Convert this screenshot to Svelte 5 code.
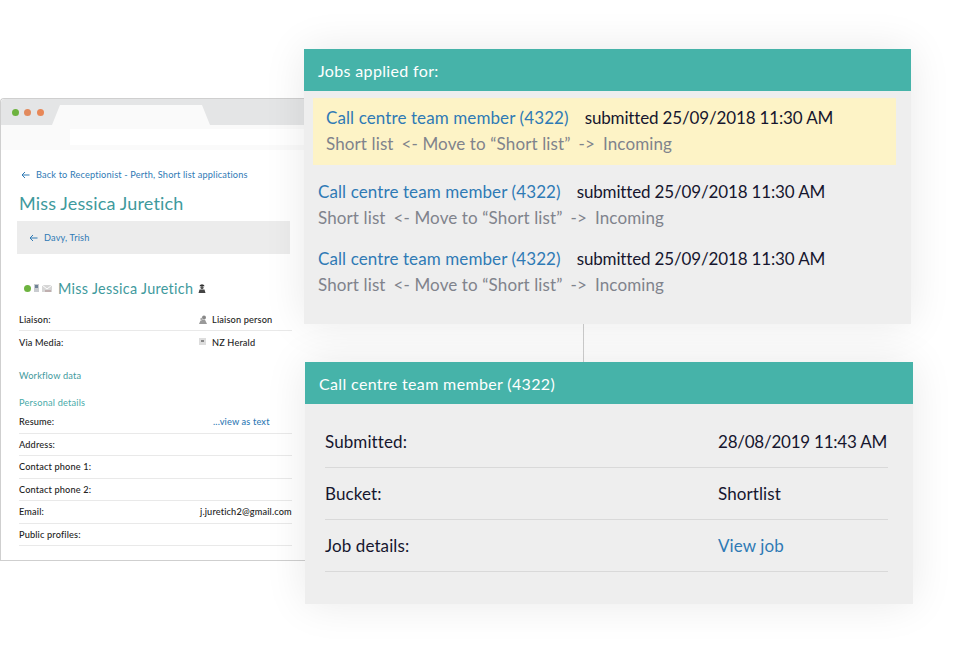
<script>
  // rows of the jobs card, the first one is highlighted
  const jobs = [
    { title: "Call centre team member (4322)", date: "25/09/2018 11:30 AM", active: true },
    { title: "Call centre team member (4322)", date: "25/09/2018 11:30 AM", active: false },
    { title: "Call centre team member (4322)", date: "25/09/2018 11:30 AM", active: false },
  ];

  const personal = [
    { label: "Resume:", value: "...view as text", link: true },
    { label: "Address:", value: "" },
    { label: "Contact phone 1:", value: "" },
    { label: "Contact phone 2:", value: "" },
    { label: "Email:", value: "j.juretich2@gmail.com" },
    { label: "Public profiles:", value: "" },
  ];

  const details = [
    { label: "Submitted:", value: "28/08/2019 11:43 AM", date: true },
    { label: "Bucket:", value: "Shortlist" },
    { label: "Job details:", value: "View job", link: true },
  ];
</script>

<div class="canvas">
  <div class="browser">
    <div class="tabbar">
      <span class="dot green"></span>
      <span class="dot orange"></span>
      <span class="dot orange2"></span>
      <span class="tab"></span>
    </div>
    <div class="addressbar"><span class="address"></span></div>
    <div class="page">
      <a class="back" href="#top">
        <svg width="9" height="8" viewBox="0 0 9 8"><path d="M8.5 4H1M4 1 1 4l3 3" fill="none" stroke="#2f7ab5" stroke-width="1"/></svg>
        Back to Receptionist - Perth, Short list applications
      </a>
      <h1>Miss Jessica Juretich</h1>
      <div class="crumb">
        <svg width="9" height="8" viewBox="0 0 9 8"><path d="M8.5 4H1M4 1 1 4l3 3" fill="none" stroke="#2f7ab5" stroke-width="1"/></svg>
        <span>Davy, Trish</span>
      </div>
      <div class="person">
        <span class="status"></span>
        <svg width="5" height="8" viewBox="0 0 5 8"><rect width="5" height="8" fill="#c9ccd0"/><rect x="1" y="1" width="3" height="3" fill="#6f8296"/></svg>
        <svg width="10" height="7" viewBox="0 0 10 7"><rect width="10" height="7" fill="#d6d6d6"/><path d="M0 0l5 4 5-4" fill="none" stroke="#fff"/><path d="M3 6h6" stroke="#a88" /></svg>
        <h2>Miss Jessica Juretich</h2>
        <svg class="bust" width="8" height="9" viewBox="0 0 8 9"><path d="M1.5 2.2h5L6 1 4 .3 2 1z" fill="#333"/><circle cx="4" cy="3.6" r="1.6" fill="#555"/><path d="M0.5 9 1.5 5.6h5l1 3.4z" fill="#444"/></svg>
      </div>
      <div class="row">
        <span>Liaison:</span>
        <span class="value">
          <svg class="mini" width="8" height="9" viewBox="0 0 8 9"><circle cx="5" cy="2.5" r="2" fill="#888"/><circle cx="2.5" cy="4" r="1.2" fill="#aaa"/><path d="M0 9 1.5 5.5h1L3 4.8h3L8 9z" fill="#999"/></svg>
          Liaison person
        </span>
      </div>
      <div class="row plain">
        <span>Via Media:</span>
        <span class="value">
          <svg class="mini" width="8" height="8" viewBox="0 0 8 8"><rect width="7" height="7" fill="#ddd"/><rect x="2" y="2" width="3" height="2" fill="#888"/></svg>
          NZ Herald
        </span>
      </div>
      <h3 class="workflow">Workflow data</h3>
      <h3 class="details">Personal details</h3>
      {#each personal as item}
        <div class="row tight">
          <span>{item.label}</span>
          {#if item.value}
            <span class="value" class:link={item.link}>{item.value}</span>
          {/if}
        </div>
      {/each}
    </div>
  </div>

  <div class="line"></div>

  <section class="card jobs">
    <header>Jobs applied for:</header>
    <div class="list">
      {#each jobs as job}
        <div class="job" class:active={job.active}>
          <p class="top"><a href="#top">{job.title}</a><span>submitted {job.date}</span></p>
          <p class="move"><span>Short list</span><span>&lt;- Move to “Short list”</span><span>-&gt;</span><span>Incoming</span></p>
        </div>
      {/each}
    </div>
  </section>

  <section class="card summary">
    <header>Call centre team member (4322)</header>
    <div class="rows">
      {#each details as item}
        <div class="detail">
          <span>{item.label}</span>
          <span class="right" class:link={item.link} class:date={item.date}>{item.value}</span>
        </div>
      {/each}
    </div>
  </section>
</div>

<style>
  :global(body) {
    background: #fff;
    font-family: "Lato", "Open Sans", sans-serif;
  }

  .canvas {
    position: relative;
    width: 960px;
    height: 651px;
    overflow: hidden;
    color: #16162e;
  }

  /* the three windows sit freely on the canvas */
  .browser {
    position: absolute;
    left: 0;
    top: 98px;
    width: 305px;
    height: 463px;
    box-sizing: border-box;
    border: 1px solid #cfcfcf;
    border-right: none;
    border-radius: 4px 0 0 0;
    background: #fff;
  }

  .tabbar {
    display: flex;
    align-items: center;
    gap: 5px;
    position: relative;
    height: 26px;
    padding-left: 11px;
    background: #e4e5e6;
    border-radius: 4px 0 0 0;
  }
  .dot {
    width: 7px;
    height: 7px;
    border-radius: 50%;
  }
  .green { background: #6db33f; }
  .orange { background: #e28a5d; }
  .orange2 { background: #e88757; margin-left: 1px; }
  .tab {
    position: absolute;
    left: 51px;
    bottom: 0;
    width: 158px;
    height: 20px;
    background: #fafafa;
    clip-path: polygon(8px 0, 150px 0, 100% 100%, 0 100%);
  }
  .addressbar {
    height: 25px;
    background: #fafafa;
    padding: 4px 0 0 69px;
    box-sizing: border-box;
  }
  .address {
    display: block;
    height: 16px;
    background: #fff;
  }

  .page {
    padding: 18px 13px 0 18px;
  }
  .back {
    display: flex;
    align-items: center;
    gap: 6px;
    margin-left: 2px;
    color: #2f7ab5;
    font-size: 9.2px;
    line-height: 14px;
    text-decoration: none;
    letter-spacing: 0.16px;
  }
  h1 {
    margin: 9px 0 0;
    color: #3f9a9d;
    font-size: 18px;
    font-weight: 400;
    line-height: 24px;
    letter-spacing: 0.15px;
  }
  .crumb {
    display: flex;
    align-items: center;
    gap: 6px;
    height: 33px;
    margin: 6px 2px 0 -2px;
    padding-left: 12px;
    background: #ececec;
    color: #2f7ab5;
    font-size: 9.2px;
    letter-spacing: 0.16px;
  }
  .person {
    display: flex;
    align-items: center;
    gap: 2px;
    height: 22px;
    margin: 23px 0 9px 5px;
  }
  .status {
    width: 7px;
    height: 7px;
    border-radius: 50%;
    background: #6db33f;
  }
  .person svg { margin-left: 1px; }
  .person h2 {
    margin: 0 0 0 4px;
    color: #3f9a9d;
    font-size: 14.4px;
    font-weight: 400;
    letter-spacing: 0.3px;
  }
  .person .bust { margin-left: 3px; }

  .row {
    display: flex;
    align-items: center;
    height: 22px;
    border-bottom: 1px solid #e9e9e9;
    font-size: 9.2px;
    letter-spacing: 0.15px;
    font-weight: 500;
    color: #222;
  }
  .row.plain { border-bottom: none; }
  .row.tight {
    height: 22.5px;
    box-sizing: border-box;
  }
  .row > span:first-child { width: 181px; }
  .value {
    display: flex;
    align-items: center;
    white-space: nowrap;
  }
  .value.link {
    color: #2f7ab5;
    padding-left: 13px;
  }
  .mini { margin-right: 5px; margin-left: -1px; }
  h3 {
    margin: 0;
    color: #3f9a9d;
    font-size: 9.2px;
    font-weight: 400;
    line-height: 14px;
    letter-spacing: 0.2px;
  }
  .workflow { margin-top: 16px; }
  .details { margin: 13px 0 1px; color: #48aaa9; }

  .line {
    position: absolute;
    left: 583px;
    top: 324px;
    width: 1px;
    height: 38px;
    background: #cfcfcf;
  }

  .card {
    position: absolute;
    background: #eeeeee;
    box-shadow: 0 0 40px rgba(0, 0, 0, 0.09);
  }
  .card header {
    box-sizing: border-box;
    height: 42px;
    padding-left: 14px;
    display: flex;
    align-items: center;
    background: #46b3a9;
    color: #fff;
    font-size: 16px;
    letter-spacing: 0.35px;
  }
  .jobs {
    left: 304px;
    top: 49px;
    width: 607px;
    height: 275px;
  }
  .list {
    padding: 7px 15px 0 10px;
  }
  .job {
    height: 67px;
    padding: 7px 0 0 5px;
    box-sizing: border-box;
    margin-left: -1px;
  }
  .job + .job { margin-left: -1px; }
  .job.active {
    margin-bottom: 7px;
    padding-left: 13px;
    background: #fdf3c6;
    margin-right: 0;
  }
  .job p {
    margin: 0;
    display: flex;
    font-size: 17px;
    line-height: 26px;
    white-space: nowrap;
  }
  .top a {
    color: #2f7ab5;
    text-decoration: none;
    margin-right: 16px;
    letter-spacing: 0.1px;
  }
  .top span { letter-spacing: -0.15px; }
  .move {
    gap: 8px;
    color: #80838c;
    letter-spacing: 0.12px;
  }

  .summary {
    left: 305px;
    top: 362px;
    width: 608px;
    height: 242px;
  }
  .rows {
    padding: 12px 25px 0 20px;
  }
  .detail {
    display: flex;
    align-items: center;
    height: 52px;
    box-sizing: border-box;
    border-bottom: 1px solid #d9d9d9;
    font-size: 17px;
    letter-spacing: 0.1px;
  }
  .detail > span:first-child { width: 393px; }
  .right { white-space: nowrap; }
  .right.date { letter-spacing: -0.23px; }
  .right.link { color: #2f7ab5; }
</style>
